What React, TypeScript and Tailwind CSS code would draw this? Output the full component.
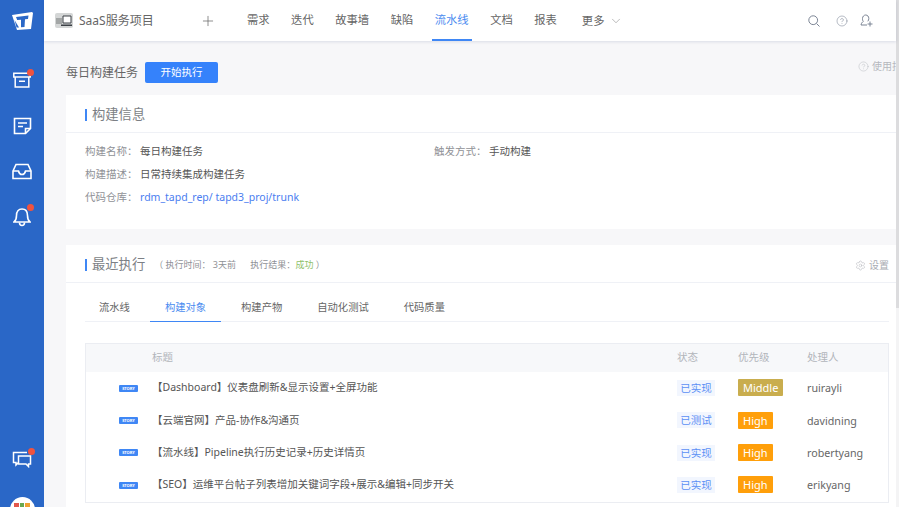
/** Pipeline build task page */
import { ChevronDown, HelpCircle, Plus, Settings } from "lucide-react";

const navItems = ["需求", "迭代", "故事墙", "缺陷", "流水线", "文档", "报表"];
const tabs = ["流水线", "构建对象", "构建产物", "自动化测试", "代码质量"];
const rows = [
  { title: "【Dashboard】仪表盘刷新&显示设置+全屏功能", status: "已实现", priority: "Middle", owner: "ruirayli" },
  { title: "【云端官网】产品-协作&沟通页", status: "已测试", priority: "High", owner: "davidning" },
  { title: "【流水线】Pipeline执行历史记录+历史详情页", status: "已实现", priority: "High", owner: "robertyang" },
  { title: "【SEO】运维平台帖子列表增加关键词字段+展示&编辑+同步开关", status: "已实现", priority: "High", owner: "erikyang" },
];

function Dot() {
  return <span className="absolute -top-[3px] -right-[3px] w-[7px] h-[7px] rounded-full bg-[#f0533f]" />;
}

function Sidebar() {
  return (
    <aside className="w-[44px] shrink-0 h-full bg-[#2a67c7] flex flex-col items-center overflow-hidden">
      <svg width="21" height="18" viewBox="0 0 21 18" className="mt-[12px]">
        <path d="M0 3 L20 0 L21 1 L19 17 L5 18 Z" fill="#fff" />
        <path d="M4 5 L16.500 3.500 L16 7 L13 7.300 L12.500 15 L9 15.200 L9 7.700 L5.200 8 Z" fill="#2a67c7" />
        <path d="M2.500 8 L7 15.500 L4.500 15.500 Z" fill="#2a67c7" />
      </svg>
      <div className="relative mt-[42px] w-[18px] h-[16px]">
        <svg width="18" height="16" viewBox="0 0 18 16" fill="none" stroke="#fff" strokeWidth="1.5">
          <path d="M.8 1.200h16.400v3.800H.8z" />
          <path d="M2.200 5v10h13.600V5M6 9.200h6" />
        </svg>
        <Dot />
      </div>
      <div className="mt-[29px] w-[19px] h-[18px]">
        <svg width="19" height="18" viewBox="0 0 19 18" fill="none" stroke="#fff" strokeWidth="1.6">
          <path d="M1.500 1.500h16v10l-5 5h-11z" />
          <path d="M12.500 16.500v-5h5M5 6h9M5 9.500h5" />
        </svg>
      </div>
      <div className="mt-[28px] w-[20px] h-[17px]">
        <svg width="20" height="17" viewBox="0 0 20 17" fill="none" stroke="#fff" strokeWidth="1.6">
          <path d="M1 8l3-6.500h12l3 6.500v7.500H1z" />
          <path d="M1 8h5.500c.5 2.500 1.800 3.500 3.500 3.500s3-1 3.500-3.500H19" />
        </svg>
      </div>
      <div className="relative mt-[27px] w-[18px] h-[20px]">
        <svg width="18" height="20" viewBox="0 0 18 20" fill="none" stroke="#fff" strokeWidth="1.6">
          <path d="M1 15c2-1.500 2.500-3 2.500-6.500C3.500 4.500 5.500 2 9 2s5.500 2.500 5.500 6.500c0 3.500.5 5 2.500 6.500z" />
          <path d="M6.500 15.500c0 2 1 3 2.500 3s2.500-1 2.500-3" />
        </svg>
        <Dot />
      </div>
      <div className="relative mt-auto mb-[29px] w-[20px] h-[17px]">
        <svg width="20" height="17" viewBox="0 0 20 17" fill="none" stroke="#fff" strokeWidth="1.500">
          <path d="M15 1.500H1.500v10H4v2.500l2.500-2.500" />
          <path d="M6.500 5h12v8h-2v2.500L14 13H6.500z" />
        </svg>
        <Dot />
      </div>
      <div className="w-[25px] h-[25px] rounded-full bg-white shrink-0 -mb-[15px] flex justify-center pt-[6px] gap-[1px]">
        <span className="w-[5px] h-[4px] bg-[#e2574c]" />
        <span className="w-[4px] h-[4px] bg-[#6aa84f]" />
        <span className="w-[5px] h-[4px] bg-[#f0a030]" />
      </div>
    </aside>
  );
}

function TopBar() {
  return (
    <header className="h-[41px] shrink-0 bg-white shadow-[0_1px_3px_rgba(40,60,110,0.14)] flex items-center pl-[11px] text-[#666] text-[11.3px] z-10">
      <svg width="18" height="15" viewBox="0 0 18 15">
        <rect width="18" height="15" rx="2" fill="#d4d6d6" />
        <rect x="1" y="5" width="6" height="6" fill="#a3a6a6" />
        <path d="M8 3h8v7H8z" fill="#fff" stroke="#3c4046" strokeWidth="1" />
        <path d="M6 11.500h11v1.500H6z" fill="#3c4046" />
      </svg>
      <span className="ml-[6px] w-[73px] text-[12px] whitespace-nowrap text-[#666]">SaaS服务项目</span>
      <Plus size={16} strokeWidth={1.1} className="ml-[48px] text-[#666]" />
      <nav className="ml-[28px] flex h-full gap-[15.5px]">
        {navItems.map((item) => (
          <span
            key={item}
            className={`flex items-center h-full px-[3px] pt-[1px] whitespace-nowrap border-b-2 ${
              item === "流水线" ? "border-[#3f87f5] text-[#4a8bf0]" : "border-transparent"
            }`}
          >
            {item}
          </span>
        ))}
      </nav>
      <span className="ml-[22px] pt-[1px]">更多</span>
      <ChevronDown size={14} strokeWidth={1} className="ml-[5px] text-[#888]" />
      <div className="ml-auto mr-[23px] flex items-center text-[#7b8494]">
        <svg width="12" height="12" viewBox="0 0 12 12" fill="none" stroke="currentColor" strokeWidth="1">
          <circle cx="5.200" cy="5.200" r="4.400" />
          <path d="M8.500 8.500L11.500 11.500" />
        </svg>
        <HelpCircle size={12} strokeWidth={1.1} className="ml-[16px]" />
        <svg width="13" height="13" viewBox="0 0 13 13" fill="none" stroke="currentColor" strokeWidth="1" className="ml-[12px]">
          <path d="M1 11c.3-2 1.500-3 2.300-3.500C2.500 6.500 2.500 5.500 2.500 4.500 2.500 2.500 4 1 5.700 1c1.800 0 3.100 1.500 3.100 3.500 0 1-.3 2-1 2.800" />
          <path d="M1 11h6M10 7.500v5M7.500 10h5" />
        </svg>
      </div>
    </header>
  );
}

function CardTitle({ title, children }: { title: string; children?: React.ReactNode }) {
  return (
    <div className="flex items-center h-[38px] pl-[19px] pt-[3px] border-b border-[#eff1f6]">
      <span className="w-[2px] h-[12px] bg-[#3f87f5]" />
      <span className="ml-[5px] text-[13.3px] text-[#7c7f85]">{title}</span>
      {children}
    </div>
  );
}

function Field({ label, value, link }: { label: string; value: string; link?: boolean }) {
  return (
    <div className="flex items-center text-[10.5px] whitespace-nowrap">
      <span className="w-[55px] text-[#8f9196]">{label}：</span>
      <span className={link ? "text-[#4a7df0]" : "text-[#555]"}>{value}</span>
    </div>
  );
}

function Table() {
  return (
    <div className="mt-[21px] mr-[7px] border border-[#ebedf2] text-[10.5px]">
      <div className="h-[28px] bg-[#f7f8fa] flex items-center text-[#b2b5ba]">
        <span className="ml-[66px] w-[525px]">标题</span>
        <span className="w-[61px]">状态</span>
        <span className="w-[69px]">优先级</span>
        <span>处理人</span>
      </div>
      {rows.map((row) => (
        <div key={row.title} className="h-[32.4px] flex items-center">
          <span className="ml-[33px] w-[19px] h-[7px] rounded-[1px] bg-[#3f87f5] text-white text-[4px] leading-[7px] text-center font-bold">
            STORY
          </span>
          <span className="ml-[14px] w-[525px] text-[#555] whitespace-nowrap">{row.title}</span>
          <span className="w-[61px]">
            <span className="inline-block w-[38px] h-[16px] leading-[16px] text-center bg-[#f2f6fe] text-[#5b8ff5]">
              {row.status}
            </span>
          </span>
          <span className="w-[69px]">
            <span
              className={`inline-block h-[17px] leading-[17px] px-[5px] rounded-[1px] text-white text-[11px] ${
                row.priority === "High" ? "bg-[#ff9f0a]" : "bg-[#c9ad4e]"
              }`}
            >
              {row.priority}
            </span>
          </span>
          <span className="text-[#666] text-[10.7px]">{row.owner}</span>
        </div>
      ))}
    </div>
  );
}

export default function App() {
  return (
    <div className="flex h-[507px] w-[899px] overflow-hidden bg-[#f7f7f9] font-['Noto_Sans','Noto_Sans_CJK_SC',sans-serif]">
      <Sidebar />
      <div className="flex-1 min-w-0 flex flex-col">
        <TopBar />
        <main className="pl-[22px] flex-1 min-h-0">
          <div className="h-[54px] flex items-start text-[12px] text-[#666]">
            <span className="mt-[23px]">每日构建任务</span>
            <button className="ml-[7px] mt-[21px] w-[73px] h-[21px] rounded-[2px] bg-[#3582fb] text-white text-[10.500px]">开始执行</button>
            <span className="ml-auto mt-[18px] flex items-center gap-[3px] text-[10px] text-[#b5b8bd] whitespace-nowrap overflow-hidden w-[38px]">
              <HelpCircle size={11} strokeWidth={1} className="shrink-0" />
              使用指南
            </span>
          </div>
          <section className="bg-white h-[134px]">
            <CardTitle title="构建信息" />
            <div className="pl-[19px] pt-[11px] flex flex-col gap-[8px]">
              <div className="flex h-[15px]">
                <div className="w-[349px]">
                  <Field label="构建名称" value="每日构建任务" />
                </div>
                <Field label="触发方式" value="手动构建" />
              </div>
              <div className="h-[15px]">
                <Field label="构建描述" value="日常持续集成构建任务" />
              </div>
              <div className="h-[15px]">
                <Field label="代码仓库" value="rdm_tapd_rep/ tapd3_proj/trunk" link />
              </div>
            </div>
          </section>
          <section className="bg-white mt-[16px] h-[262px]">
            <CardTitle title="最近执行">
              <span className="ml-[9px] text-[9px] text-[#8f9196] whitespace-nowrap">
                （ 执行时间： 3天前 <span className="ml-[12px]">执行结果：</span>
                <span className="text-[#8fbf6a]">成功</span> ）
              </span>
              <span className="ml-auto mr-[7px] flex items-center gap-[3px] text-[10px] text-[#a9acb2]">
                <Settings size={11} strokeWidth={1} />
                设置
              </span>
            </CardTitle>
            <div className="pl-[19px]">
              <div className="mr-[7px] mt-[13px] flex h-[26px] gap-[5px] border-b border-[#eff1f6] text-[10.300px] text-[#666]">
                {tabs.map((tab) => (
                  <span
                    key={tab}
                    className={`px-[15px] pt-[4px] h-[26px] whitespace-nowrap border-b first:-ml-[1px] ${
                      tab === "构建对象" ? "border-[#3f87f5] text-[#4a8bf0]" : "border-transparent"
                    }`}
                  >
                    {tab}
                  </span>
                ))}
              </div>
              <Table />
            </div>
          </section>
        </main>
      </div>
      <div className="w-[3px] shrink-0 bg-[#f4f4f5]">
        <div className="h-[308px] bg-[#dcdcde]" />
      </div>
    </div>
  );
}
